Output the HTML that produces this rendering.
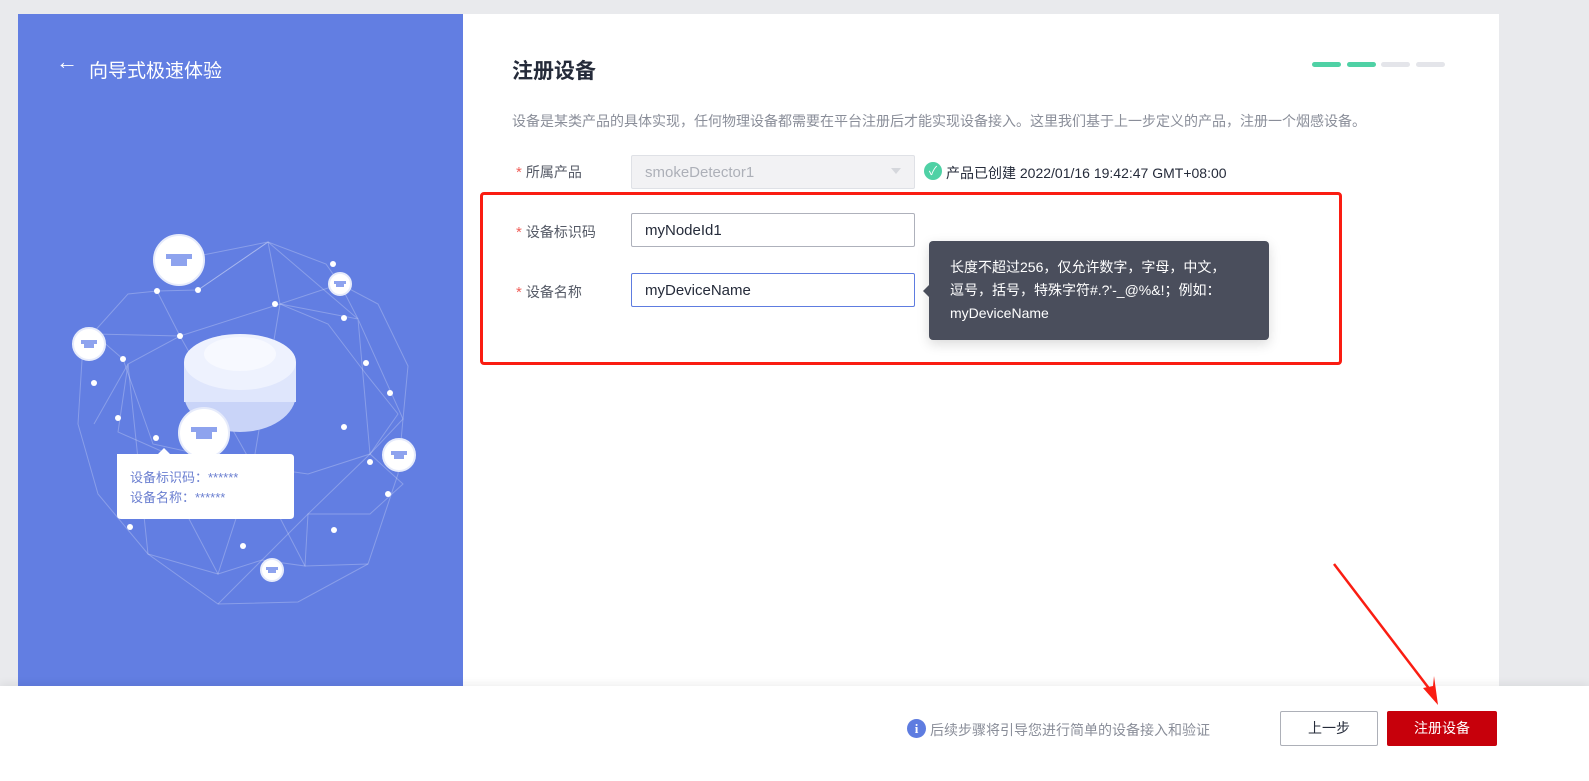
<!DOCTYPE html>
<html><head><meta charset="utf-8"><style>
*{margin:0;padding:0;box-sizing:border-box}
body{width:1589px;height:781px;background:#e9eaed;position:relative;overflow:hidden;font-family:"Liberation Sans","Noto Sans CJK SC",sans-serif}
.card{position:absolute;left:18px;top:14px;width:1481px;height:680px;background:#fff}
.left{position:absolute;left:18px;top:14px;width:445px;height:672px;background:#627ee2}
.abs{position:absolute}
.foot{position:absolute;left:0;top:686px;width:1589px;height:95px;background:#fff;box-shadow:0 -3px 8px rgba(0,0,0,.06)}
.lbl{position:absolute;font-size:14px;color:#555a66}
.lbl b{color:#f0605a;font-weight:normal;margin-right:4px;font-size:15px}
.inp{position:absolute;border:1px solid #aeb1bb;border-radius:2px;font-size:15px;color:#252b3a;padding-left:13px;line-height:34px;height:34px}
</style></head><body>
<div class="card"></div>
<div class="left"></div>
<div class="abs" style="left:56px;top:49px;color:#fff;font-size:22px;font-weight:bold">←</div>
<div class="abs" style="left:89px;top:56px;color:#fff;font-size:19px">向导式极速体验</div>
<svg class="abs" style="left:18px;top:14px" width="445" height="672">
<g stroke="rgba(255,255,255,.25)" stroke-width="1" fill="none">
<path d="M160 246 L250 228 L308 250 L322 270 L360 290 L390 352 L385 405 L380 460 L350 550 L280 588 L200 590 L130 540 L80 480 L60 410 L65 330 L110 280 L139 277 L180 276 L250 228 L262 290 L322 270 L340 305"/>
<path d="M139 277 L162 322 L262 290 L310 310 L348 360 L380 400 L352 440 L290 500 L287 552 L244 546 L200 560 L160 484 L150 440 L100 418 L110 350 L76 410"/>
<path d="M162 322 L76 320 L105 345 L135 430 L235 452 L290 460 L352 440 L385 470 L352 500 L290 500 L244 546 L200 590"/>
<path d="M180 276 L250 228 L340 305 L385 405 L352 440 L340 305 L262 290 L235 452 L200 560 L130 540 L110 350 L162 322 L235 452 L287 552 L350 550"/>
</g>
<g fill="#fff">
<circle cx="139" cy="277" r="3"/><circle cx="180" cy="276" r="3"/><circle cx="257" cy="290" r="3"/><circle cx="326" cy="304" r="3"/><circle cx="162" cy="322" r="3"/><circle cx="348" cy="349" r="3"/><circle cx="105" cy="345" r="3"/><circle cx="76" cy="369" r="3"/><circle cx="372" cy="379" r="3"/><circle cx="100" cy="404" r="3"/><circle cx="138" cy="424" r="3"/><circle cx="326" cy="413" r="3"/><circle cx="352" cy="448" r="3"/><circle cx="273" cy="456" r="3"/><circle cx="370" cy="480" r="3"/><circle cx="316" cy="516" r="3"/><circle cx="112" cy="513" r="3"/><circle cx="225" cy="532" r="3"/><circle cx="315" cy="250" r="3"/><circle cx="200" cy="356" r="3"/><circle cx="258" cy="400" r="3"/>
</g>
<ellipse cx="222" cy="380" rx="56" ry="38" fill="#c9d4f8"/>
<rect x="166" y="348" width="112" height="40" fill="#dfe6fc"/>
<ellipse cx="222" cy="348" rx="56" ry="28" fill="#eef2fe"/>
<ellipse cx="222" cy="340" rx="36" ry="17" fill="#f7f9ff"/>
<g fill="#fff" stroke="#e6ebfb" stroke-width="2">
<circle cx="161" cy="246" r="25"/><circle cx="322" cy="270" r="11"/><circle cx="71" cy="330" r="16"/><circle cx="186" cy="419" r="25"/><circle cx="381" cy="441" r="16"/><circle cx="254" cy="556" r="11"/>
</g>
<g fill="#8ea3ee">
<rect x="148" y="240" width="26" height="5"/><rect x="153" y="245" width="16" height="7"/>
<rect x="173" y="413" width="26" height="5"/><rect x="178" y="418" width="16" height="7"/>
<rect x="63" y="326" width="16" height="4"/><rect x="66" y="330" width="10" height="4"/>
<rect x="373" y="437" width="16" height="4"/><rect x="376" y="441" width="10" height="4"/>
<rect x="316" y="267" width="12" height="3"/><rect x="318" y="270" width="8" height="3"/>
<rect x="248" y="553" width="12" height="3"/><rect x="250" y="556" width="8" height="3"/>
</g>
<path d="M99 440 L140 440 L146 434 L152 440 L272 440 Q276 440 276 444 L276 501 Q276 505 272 505 L103 505 Q99 505 99 501 Z" fill="#fff"/>
<text x="112" y="468" font-size="13" fill="#6b7fd0" font-family="Liberation Sans,Noto Sans CJK SC,sans-serif">设备标识码：******</text>
<text x="112" y="488" font-size="13" fill="#6b7fd0" font-family="Liberation Sans,Noto Sans CJK SC,sans-serif">设备名称：******</text>
</svg>

<div class="abs" style="left:512px;top:55px;font-size:21px;font-weight:bold;color:#252b3a">注册设备</div>
<div class="abs" style="left:1312px;top:62px;width:29px;height:5px;border-radius:3px;background:#4fd1a5"></div>
<div class="abs" style="left:1347px;top:62px;width:29px;height:5px;border-radius:3px;background:#4fd1a5"></div>
<div class="abs" style="left:1381px;top:62px;width:29px;height:5px;border-radius:3px;background:#e4e5ea"></div>
<div class="abs" style="left:1416px;top:62px;width:29px;height:5px;border-radius:3px;background:#e4e5ea"></div>
<div class="abs" style="left:512px;top:111px;font-size:14px;color:#8a8e99">设备是某类产品的具体实现，任何物理设备都需要在平台注册后才能实现设备接入。这里我们基于上一步定义的产品，注册一个烟感设备。</div>

<div class="lbl" style="left:516px;top:162px"><b>*</b>所属产品</div>
<div class="inp" style="left:631px;top:155px;width:284px;background:#f2f2f4;border-color:#dfe1e6;color:#adb0b8">smokeDetector1</div>
<div class="abs" style="left:891px;top:168px;width:0;height:0;border-left:5px solid transparent;border-right:5px solid transparent;border-top:6px solid #d5d7dc"></div>
<div class="abs" style="left:924px;top:162px;width:18px;height:18px;border-radius:50%;background:#4fd1a5;color:#fff;font-size:12px;text-align:center;line-height:18px">✓</div>
<div class="abs" style="left:946px;top:163px;font-size:14px;color:#252b3a">产品已创建 2022/01/16 19:42:47 GMT+08:00</div>

<div class="abs" style="left:480px;top:192px;width:862px;height:173px;border:3px solid #fa1d12;border-radius:4px"></div>
<div class="lbl" style="left:516px;top:222px"><b>*</b>设备标识码</div>
<div class="inp" style="left:631px;top:213px;width:284px">myNodeId1</div>
<div class="lbl" style="left:516px;top:282px"><b>*</b>设备名称</div>
<div class="inp" style="left:631px;top:273px;width:284px;border-color:#5e7ce0">myDeviceName</div>

<div class="abs" style="left:929px;top:241px;width:340px;height:99px;background:#4a4e5c;border-radius:4px;box-shadow:0 4px 12px rgba(0,0,0,.15)"></div>
<div class="abs" style="left:923px;top:284px;width:0;height:0;border-top:7px solid transparent;border-bottom:7px solid transparent;border-right:7px solid #4a4e5c"></div>
<div class="abs" style="left:950px;top:256px;width:300px;font-size:14px;line-height:23px;color:#fff">长度不超过256，仅允许数字，字母，中文，<br>逗号，括号，特殊字符#.?'-_@%&amp;!；例如：<br>myDeviceName</div>

<div class="foot"></div>
<div class="abs" style="left:907px;top:719px;width:19px;height:19px;border-radius:50%;background:#5e7ce0;color:#fff;font-size:13px;font-weight:bold;text-align:center;line-height:19px;font-family:'Liberation Serif',serif">i</div>
<div class="abs" style="left:930px;top:720px;font-size:14px;color:#8a8e99">后续步骤将引导您进行简单的设备接入和验证</div>
<div class="abs" style="left:1280px;top:711px;width:98px;height:35px;border:1px solid #adb0b8;border-radius:2px;text-align:center;line-height:33px;font-size:14px;color:#252b3a">上一步</div>
<div class="abs" style="left:1387px;top:711px;width:110px;height:35px;background:#c7000b;border-radius:2px;text-align:center;line-height:35px;font-size:14px;color:#fff">注册设备</div>
<svg class="abs" style="left:1330px;top:560px" width="115" height="150"><line x1="4" y1="4" x2="104" y2="135" stroke="#fa1d12" stroke-width="2.5"/><path d="M108 145 L93 128 L103 126 L104 116 Z" fill="#fa1d12"/></svg>
</body></html>
